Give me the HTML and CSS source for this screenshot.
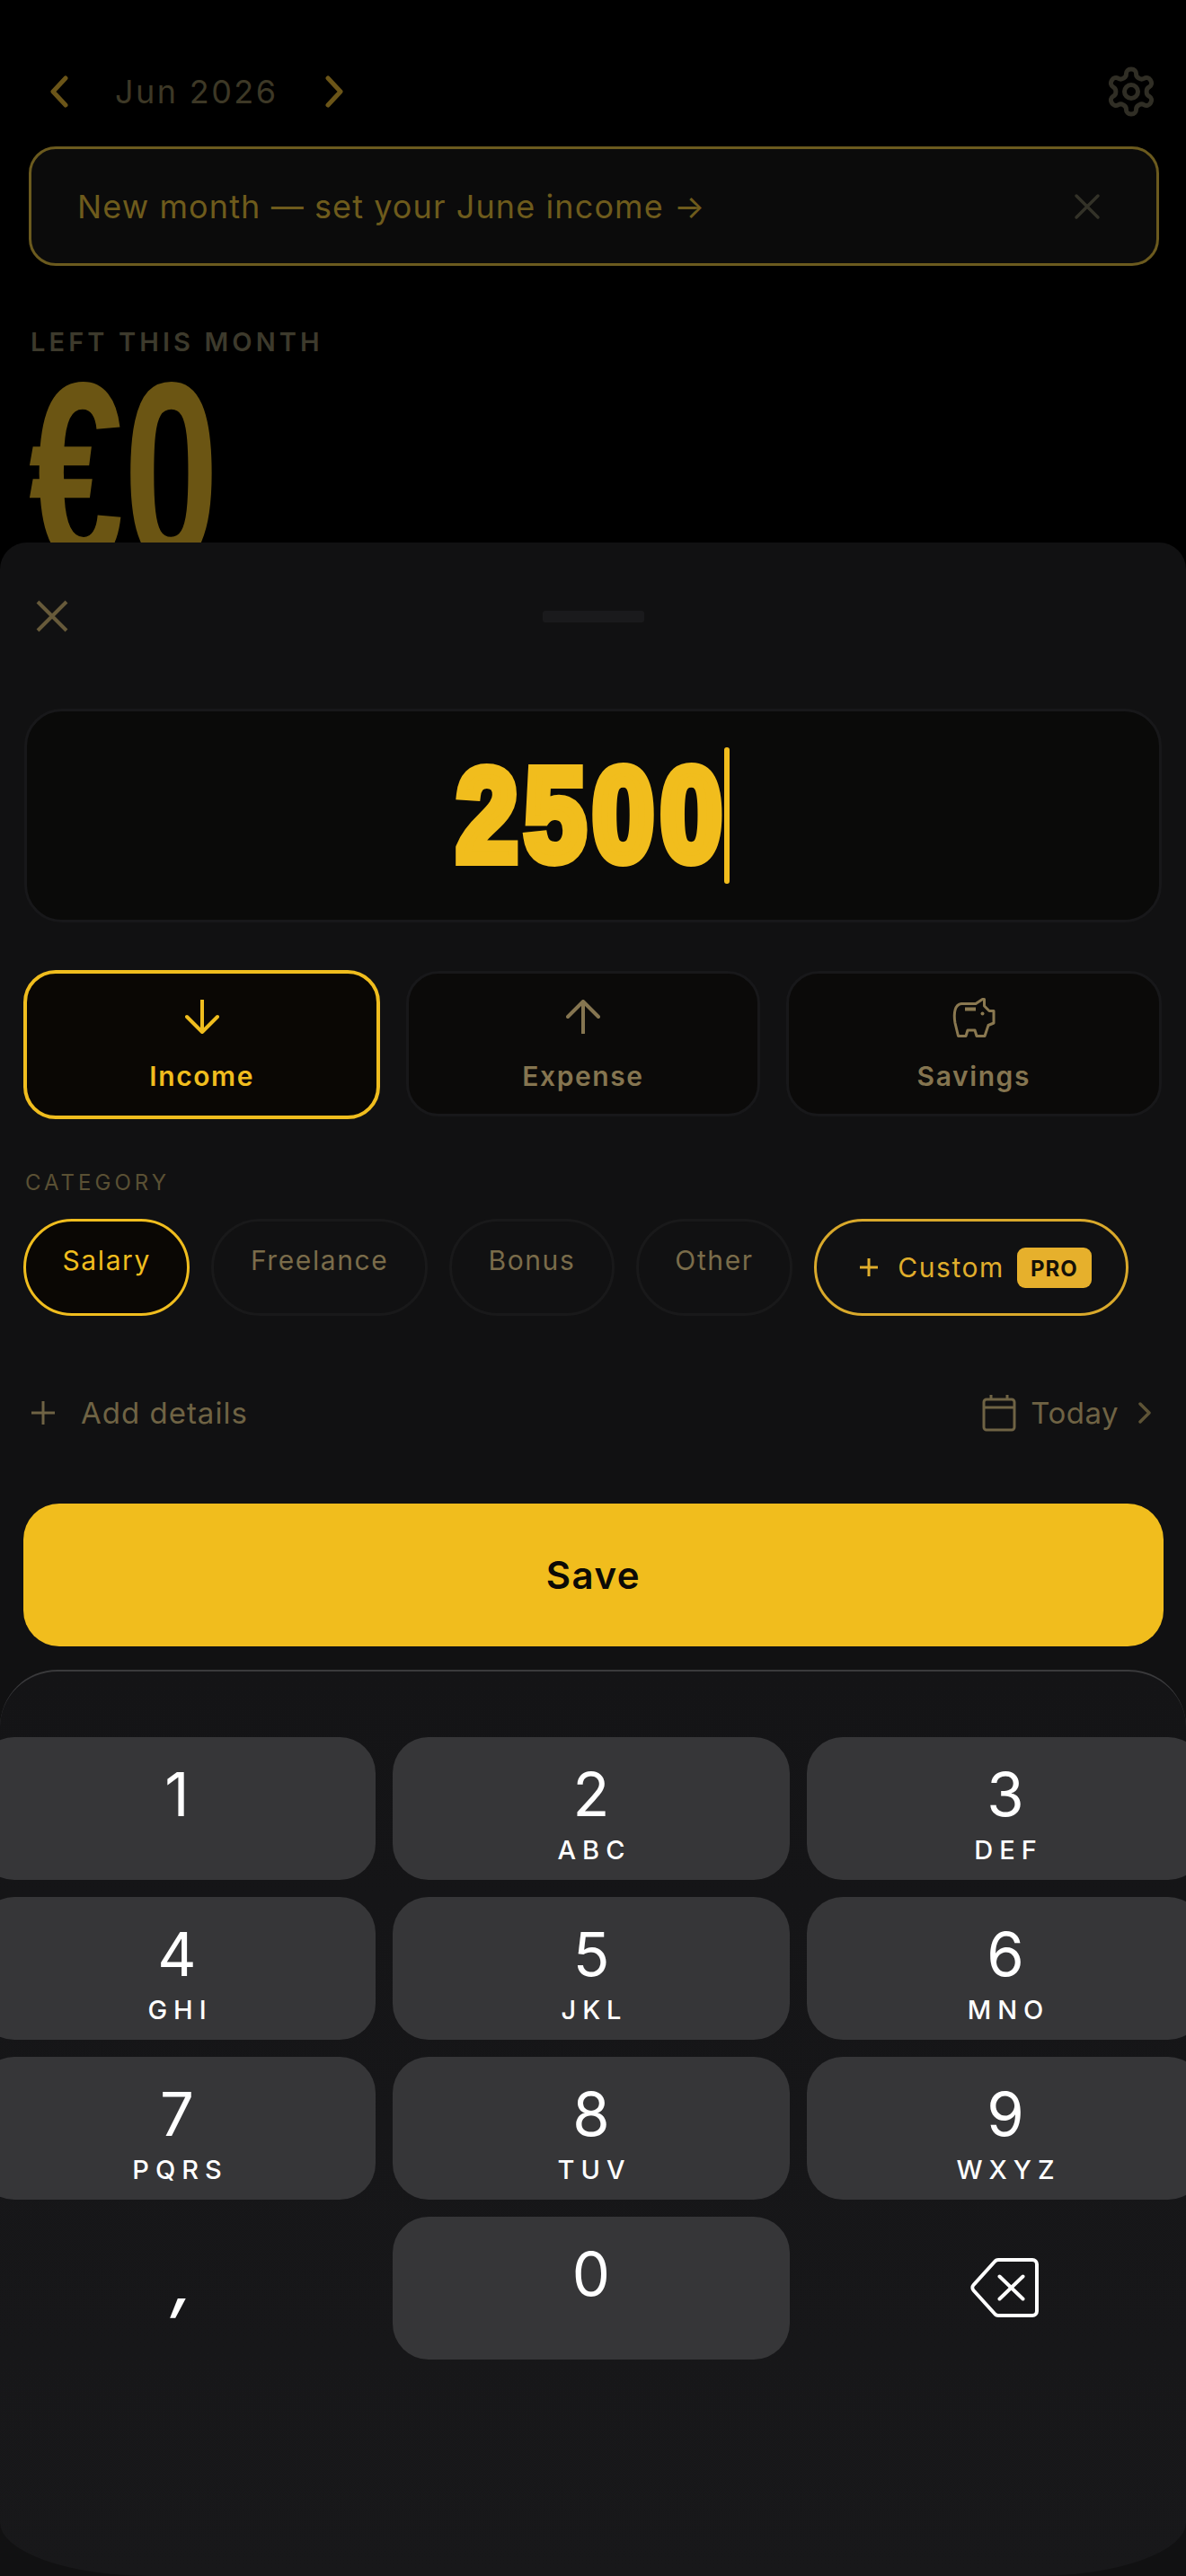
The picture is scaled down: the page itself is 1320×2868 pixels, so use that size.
FILE: index.html
```html
<!DOCTYPE html>
<html lang="en">
<head>
<meta charset="utf-8">
<title>Budget</title>
<link rel="stylesheet" href="styles.css">
</head>
<body>
<div class="screen">
  <header class="month-bar">
    <div class="month-nav">
      <svg class="chev" viewBox="0 0 22 36"><path d="M18 3 4 18l14 15"/></svg>
      <span class="month-name">Jun 2026</span>
      <svg class="chev" viewBox="0 0 22 36"><path d="M4 3l14 15L4 33"/></svg>
    </div>
    <svg class="gear" viewBox="0 0 24 24"><path d="M12.22 2h-.44a2 2 0 0 0-2 2v.18a2 2 0 0 1-1 1.73l-.43.25a2 2 0 0 1-2 0l-.15-.08a2 2 0 0 0-2.73.73l-.22.38a2 2 0 0 0 .73 2.73l.15.1a2 2 0 0 1 1 1.72v.51a2 2 0 0 1-1 1.74l-.15.09a2 2 0 0 0-.73 2.73l.22.38a2 2 0 0 0 2.73.73l.15-.08a2 2 0 0 1 2 0l.43.25a2 2 0 0 1 1 1.73V20a2 2 0 0 0 2 2h.44a2 2 0 0 0 2-2v-.18a2 2 0 0 1 1-1.73l.43-.25a2 2 0 0 1 2 0l.15.08a2 2 0 0 0 2.73-.73l.22-.39a2 2 0 0 0-.73-2.73l-.15-.08a2 2 0 0 1-1-1.74v-.5a2 2 0 0 1 1-1.74l.15-.09a2 2 0 0 0 .73-2.73l-.22-.38a2 2 0 0 0-2.73-.73l-.15.08a2 2 0 0 1-2 0l-.43-.25a2 2 0 0 1-1-1.73V4a2 2 0 0 0-2-2z"/><circle cx="12" cy="12" r="3"/></svg>
  </header>
  <div class="banner">
    <span class="banner-text">New month — set your June income →</span>
    <svg class="banner-x" viewBox="0 0 30 30"><path d="M3 3l24 24M27 3 3 27"/></svg>
  </div>
  <div class="left-label">LEFT THIS MONTH</div>
  <div class="left-value"><span>€0</span></div>
</div>

<section class="sheet">
  <div class="sheet-head">
    <svg class="close" viewBox="0 0 36 36"><path d="M2 2l32 32M34 2 2 34"/></svg>
    <div class="handle"></div>
  </div>

  <div class="amount">
    <div class="amount-digits"><span>2500</span></div>
    <div class="caret"></div>
  </div>

  <div class="types">
    <div class="type type-on">
      <svg class="type-arrow" viewBox="0 0 38 38"><path d="M19 1v35M2 19l17 17 17-17"/></svg>
      <span class="type-label">Income</span>
    </div>
    <div class="type">
      <svg class="type-arrow" viewBox="0 0 38 38"><path d="M19 37V2M2 19 19 2l17 17"/></svg>
      <span class="type-label">Expense</span>
    </div>
    <div class="type">
      <svg class="pig" viewBox="0 0 48 46"><path d="M10 7.500h16l7.500-5h2V10l5.500 5.500H46V29l-6 2.500-4 12h-9l-2-6.500h-8l-2 6.500H6.500L3 29C1 17 3 8.500 10 7.500z"/><rect class="pig-slot" x="14" y="11.500" width="12" height="4"/><circle class="pig-eye" cx="33.500" cy="18.500" r="2"/></svg>
      <span class="type-label">Savings</span>
    </div>
  </div>

  <div class="cat-label">CATEGORY</div>
  <div class="chips">
    <div class="chip chip-on">Salary</div>
    <div class="chip">Freelance</div>
    <div class="chip">Bonus</div>
    <div class="chip">Other</div>
    <div class="chip chip-custom">
      <svg class="chip-plus" viewBox="0 0 22 22"><path d="M11 1v20M1 11h20"/></svg>
      <span>Custom</span>
      <span class="pro">PRO</span>
    </div>
  </div>

  <div class="details">
    <div class="details-add">
      <svg class="details-plus" viewBox="0 0 28 28"><path d="M14 1v26M1 14h26"/></svg>
      <span>Add details</span>
    </div>
    <div class="details-date">
      <svg class="cal" viewBox="0 0 38 42"><path d="M5 6h28a3 3 0 0 1 3 3v28a3 3 0 0 1-3 3H5a3 3 0 0 1-3-3V9a3 3 0 0 1 3-3zM2 15h34M10 1v5M28 1v5"/></svg>
      <span class="today">Today</span>
      <svg class="details-chev" viewBox="0 0 14 24"><path d="M2 2l10 10L2 22"/></svg>
    </div>
  </div>

  <button class="save">Save</button>

  <div class="keyboard">
    <div class="keys">
      <div class="key"><span class="digit">1</span><span class="letters">&nbsp;</span></div>
      <div class="key"><span class="digit">2</span><span class="letters">ABC</span></div>
      <div class="key"><span class="digit">3</span><span class="letters">DEF</span></div>
      <div class="key"><span class="digit">4</span><span class="letters">GHI</span></div>
      <div class="key"><span class="digit">5</span><span class="letters">JKL</span></div>
      <div class="key"><span class="digit">6</span><span class="letters">MNO</span></div>
      <div class="key"><span class="digit">7</span><span class="letters">PQRS</span></div>
      <div class="key"><span class="digit">8</span><span class="letters">TUV</span></div>
      <div class="key"><span class="digit">9</span><span class="letters">WXYZ</span></div>
      <div class="key key-plain"><span class="comma">,</span></div>
      <div class="key"><span class="digit">0</span><span class="letters">&nbsp;</span></div>
      <div class="key key-plain">
        <svg class="backspace" viewBox="0 0 80 68"><path d="M32 3h38a5 5 0 0 1 5 5v52a5 5 0 0 1-5 5H32a5 5 0 0 1-3.500-1.500L4.500 37a4.500 4.500 0 0 1 0-6l24-26.500A5 5 0 0 1 32 3zM33.500 21.500l26 25M59.500 21.500l-26 25"/></svg>
      </div>
    </div>
  </div>
</section>
</body>
</html>
```

FILE: styles.css
```css
* { box-sizing: border-box; }
html, body { margin: 0; height: 100%; }
body {
  position: relative;
  width: 1320px;
  height: 2868px;
  overflow: hidden;
  background: #000;
  font-family: Inter, "Liberation Sans", sans-serif;
}
svg { display: block; fill: none; stroke-linecap: round; stroke-linejoin: round; }

/* dimmed screen behind the sheet */
.screen { padding: 76px 30px 0 32px; }
.month-bar { display: flex; justify-content: space-between; align-items: center; height: 52px; padding-left: 23px; }
.month-nav { display: flex; align-items: center; }
.chev { width: 22px; height: 36px; stroke: #6b5518; stroke-width: 5; }
.month-name { margin: 0 52px 0 51px; font-size: 36px; letter-spacing: 2.400px; color: #3d3826; }
.gear { width: 60px; height: 60px; margin-right: 1px; stroke: #302e25; stroke-width: 2; }
.banner {
  display: flex; justify-content: space-between; align-items: center;
  height: 133px; margin-top: 35px; padding: 0 62px 0 51px;
  background: #0b0b0b; border: 3px solid #6b5a1e; border-radius: 30px;
}
.banner-text { font-size: 36px; letter-spacing: 1.100px; color: #6e5b1c; }
.banner-x { width: 30px; height: 30px; stroke: #333228; stroke-width: 3.500; }
.left-label { margin-top: 67px; padding-left: 2px; font-size: 29px; line-height: 36px; font-weight: 600; letter-spacing: 4.100px; color: #3d3a2c; }
.left-value { height: 240px; margin-top: 7px; }
.left-value span {
  display: inline-block; transform: scaleX(.66); transform-origin: 0 0;
  font-family: "Liberation Sans", sans-serif; font-weight: 700; font-size: 288px; line-height: 240px; color: #6b5513;
}

/* sheet */
.sheet {
  position: absolute; left: 0; right: 0; top: 604px; bottom: 0;
  display: flex; flex-direction: column;
  padding: 0 25px 0 26px;
  background: #111112; border-radius: 30px 30px 0 0; overflow: hidden;
}
.sheet-head { display: grid; grid-template-columns: 1fr 113px 1fr; align-items: center; height: 164px; margin-bottom: 21px; }
.close { width: 36px; height: 36px; margin-left: 14px; stroke: #675a3a; stroke-width: 4; stroke-linecap: butt; }
.handle { height: 13px; background: #1a1a1c; border-radius: 3px; }

.amount {
  display: flex; justify-content: center; align-items: center;
  height: 238px; margin: 0 2px 0 1px;
  background: #0a0a09; border: 3px solid #18181a; border-radius: 42px;
}
.amount-digits { width: 296px; height: 150px; }
.amount-digits span {
  display: inline-block; transform: scaleX(.84); transform-origin: 0 0;
  font-family: "Liberation Sans", sans-serif; font-weight: 700; font-size: 146px; line-height: 150px; letter-spacing: 9px;
  color: #f1bd1d; -webkit-text-stroke: 12px #f1bd1d;
}
.caret { width: 6px; height: 152px; margin-left: 2px; background: #f1bd1d; border-radius: 3px; }

.types { display: grid; grid-template-columns: 397fr 393fr 418fr; gap: 29px; align-items: start; margin: 53px 2px 0 0; }
.type {
  display: flex; flex-direction: column; align-items: center;
  height: 162px; margin-top: 1px; padding-top: 29px;
  background: #0b0a09; border: 3px solid #18181a; border-radius: 36px;
}
.type-on { height: 166px; margin-top: 0; padding-top: 29px; background: #0a0704; border: 4px solid #f0bd1e; }
.type-arrow { width: 38px; height: 38px; stroke: #857550; stroke-width: 4; }
.type-on .type-arrow { stroke: #f0bd1e; }
.pig { width: 48px; height: 46px; margin-top: -3px; margin-bottom: -5px; stroke: #8a7850; stroke-width: 3; stroke-linecap: butt; }
.pig-slot { fill: #8a7850; stroke: none; }
.pig-eye { fill: #8a7850; stroke: none; }
.type-label { margin-top: 27px; font-size: 30px; line-height: 40px; font-weight: 600; letter-spacing: 1.600px; color: #857550; }
.type-on .type-label { color: #f0bd1e; }

.cat-label { margin-top: 56px; font-size: 24px; line-height: 30px; letter-spacing: 4px; color: #5a5034; padding-left: 2px; }
.chips { display: flex; gap: 24px; margin-top: 25px; }
.chip {
  height: 108px; padding: 23px 40.500px 0; flex: none;
  font-size: 30px; line-height: 40px; letter-spacing: 1.600px; color: #7a6c4a;
  background: #111112; border: 3px solid #19191a; border-radius: 54px;
}
.chip-on { color: #f0bd1e; background: #0a0704; border-color: #f0bd1e; }
.chip-custom {
  display: flex; align-items: center; padding: 0 38px 0 47px; gap: 0;
  color: #e0ae2c; border-color: #d9a92b;
}
.chip-plus { width: 22px; height: 22px; margin-right: 21px; stroke: #e0ae2c; stroke-width: 3; stroke-linecap: butt; }
.pro {
  margin-left: 14px; padding: 0 15px; height: 45px;
  font-size: 24px; line-height: 47px; font-weight: 700; letter-spacing: 1px;
  color: #141108; background: #e6b02c; border-radius: 9px;
}

.details { display: flex; justify-content: space-between; align-items: center; height: 60px; margin-top: 78px; padding: 0 14px 0 8px; font-size: 33px; letter-spacing: 1px; color: #6f6344; }
.details-add, .details-date { display: flex; align-items: center; }
.details-plus { width: 28px; height: 28px; margin-right: 28px; stroke: #6f6344; stroke-width: 3; stroke-linecap: butt; }
.cal { width: 38px; height: 42px; margin-right: 16px; stroke: #6f6344; stroke-width: 3; stroke-linecap: butt; }
.today { letter-spacing: .500px; }
.details-chev { width: 14px; height: 24px; margin-left: 22px; stroke: #5e5436; stroke-width: 3.500; }

.save {
  display: block; height: 159px; margin-top: 71px;
  font-family: inherit; font-size: 42px; font-weight: 600; letter-spacing: 1.500px; color: #0c0a06;
  background: #f1bd1d; border: 0; border-radius: 40px;
}

.keyboard {
  flex: 1; margin: 26px -25px 0 -26px; padding-top: 73px; overflow: hidden;
  background: linear-gradient(#141416, #18181a);
  border-top: 2px solid #3a3a3c;
  border-radius: 64px 64px 170px 170px / 64px 64px 60px 60px;
}
.keys { display: grid; grid-template-columns: repeat(3, 442px); grid-auto-rows: 159px; gap: 19px; margin-left: -24px; width: 1364px; }
.key { display: flex; flex-direction: column; align-items: center; background: #363638; border-radius: 40px; color: #fff; }
.key-plain { background: transparent; justify-content: center; }
.digit { margin-top: 29px; font-size: 67px; line-height: 70px; }
.letters { margin-top: 10px; font-size: 29px; line-height: 34px; letter-spacing: 7px; padding-left: 7px; font-weight: 500; }
.comma { font-size: 76px; line-height: 70px; font-weight: 500; transform: skewX(-14deg); margin-top: -18px; padding-left: 20px; }
.backspace { width: 80px; height: 68px; margin-top: -2px; stroke: #fff; stroke-width: 4; }
```
